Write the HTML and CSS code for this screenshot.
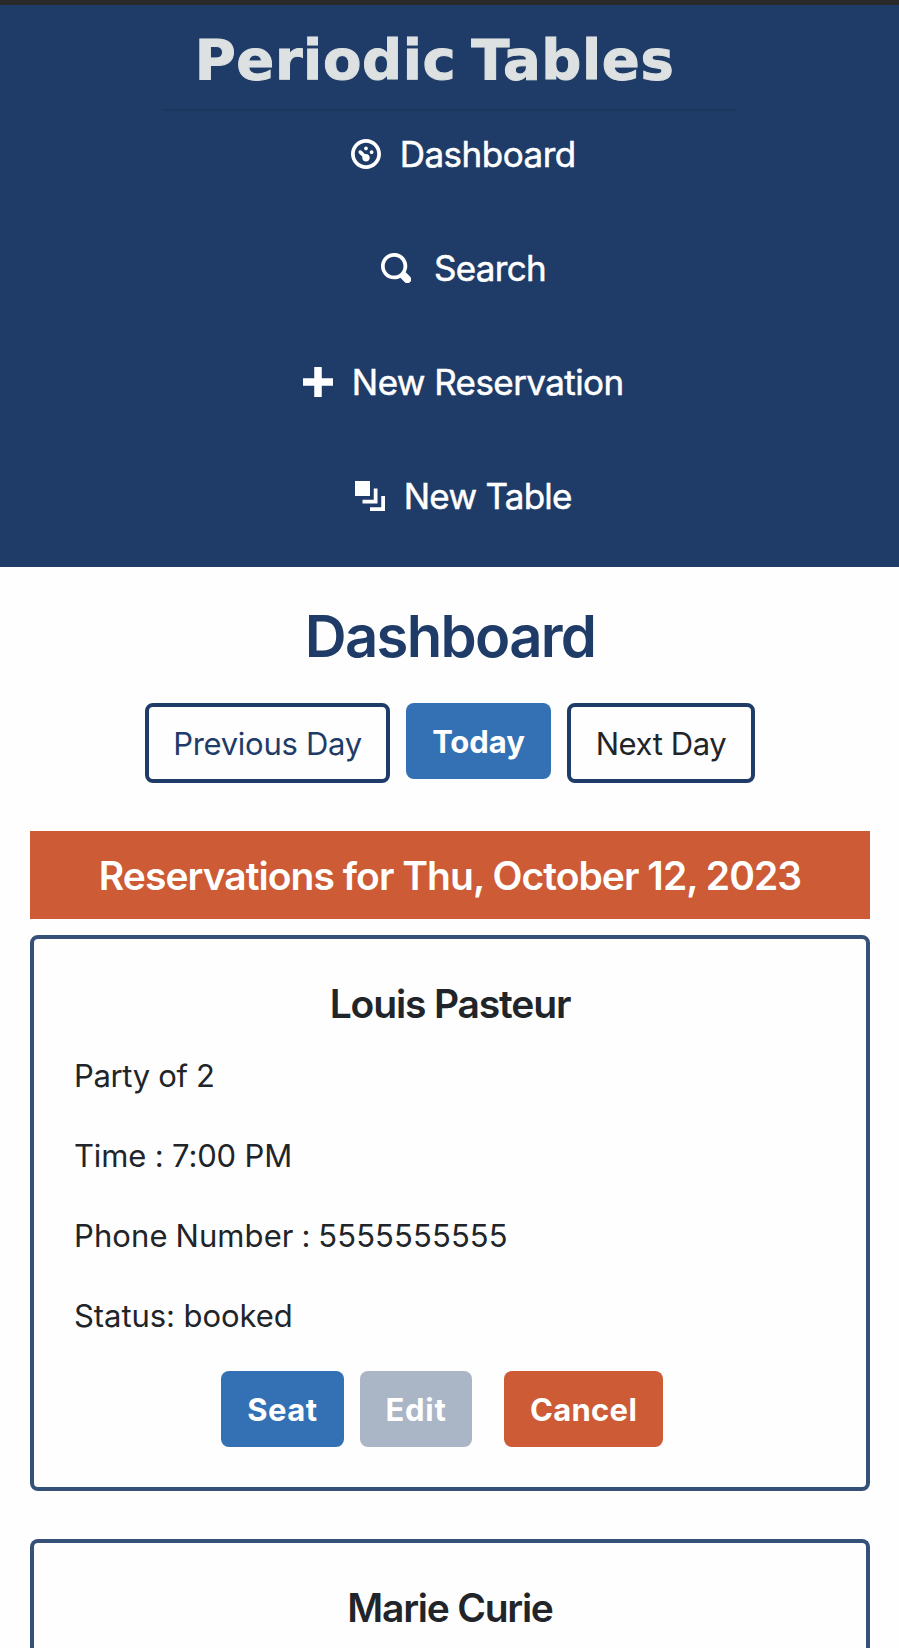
FILE: index.html
```
<!DOCTYPE html>
<html lang="en">
<head>
<meta charset="utf-8">
<title>Periodic Tables</title>
<link rel="stylesheet" href="styles.css">
</head>
<body>
<header class="header">
  <div class="brand">Periodic Tables</div>
  <hr class="divider">
  <nav class="nav">
    <a class="nav-link nav-dashboard"><svg class="oi" viewBox="0 0 8 8"><path d="M4 0c-2.2 0-4 1.8-4 4s1.8 4 4 4 4-1.8 4-4-1.8-4-4-4zm0 1c1.66 0 3 1.34 3 3s-1.34 3-3 3-3-1.34-3-3 1.34-3 3-3zm0 1c-.28 0-.5.22-.5.5s.22.5.5.5.5-.22.5-.5-.22-.5-.5-.5zm-1.66 1a.5.5 0 0 0-.19.84l.91.91c-.02.08-.06.16-.06.25 0 .55.45 1 1 1s1-.45 1-1-.45-1-1-1c-.09 0-.17.04-.25.06l-.91-.91a.5.5 0 0 0-.44-.16.5.5 0 0 0-.06 0zm3.16 0c-.28 0-.5.22-.5.5s.22.5.5.5.5-.22.5-.5-.22-.5-.5-.5z"/></svg><span>Dashboard</span></a>
    <a class="nav-link nav-search"><svg class="oi" viewBox="0 0 8 8"><path d="M3.5 0c-1.93 0-3.5 1.57-3.5 3.5s1.57 3.5 3.5 3.5c.59 0 1.17-.14 1.66-.41a1 1 0 0 0 .13.13l1 1a1.02 1.02 0 1 0 1.44-1.44l-1-1a1 1 0 0 0-.16-.13c.27-.49.44-1.06.44-1.66 0-1.93-1.55-3.5-3.5-3.5zm0 1c1.39 0 2.5 1.11 2.5 2.5 0 .66-.24 1.27-.66 1.72-.01.01-.02.02-.03.03a1 1 0 0 0-.13.13c-.44.4-1.04.63-1.69.63-1.39 0-2.5-1.11-2.5-2.5s1.11-2.5 2.5-2.5z"/></svg><span>Search</span></a>
    <a class="nav-link nav-reservation"><svg class="oi" viewBox="0 0 8 8"><path d="M3 0v3h-3v2h3v3h2v-3h3v-2h-3v-3h-2z"/></svg><span>New Reservation</span></a>
    <a class="nav-link nav-table"><svg class="oi" viewBox="0 0 8 8"><path d="M0 0v4h4v-4h-4zm5 2v3h-3v1h4v-4h-1zm2 2v3h-3v1h4v-4h-1z"/></svg><span>New Table</span></a>
  </nav>
</header>
<main class="main">
  <h1 class="page-title">Dashboard</h1>
  <div class="day-nav">
    <button class="btn btn-outline btn-prev">Previous Day</button>
    <button class="btn btn-blue btn-today">Today</button>
    <button class="btn btn-outline btn-next">Next Day</button>
  </div>
  <h4 class="banner">Reservations for Thu, October 12, 2023</h4>
  <section class="card">
    <h4 class="card-name louis">Louis Pasteur</h4>
    <div class="details">
      <p class="party">Party of 2</p>
      <p class="time">Time : 7:00 PM</p>
      <p class="phone">Phone Number : 5555555555</p>
      <p class="status">Status: booked</p>
    </div>
    <div class="actions">
      <button class="btn btn-blue btn-seat">Seat</button>
      <button class="btn btn-grey btn-edit">Edit</button>
      <button class="btn btn-orange btn-cancel">Cancel</button>
    </div>
  </section>
  <section class="card card-partial">
    <h4 class="card-name marie">Marie Curie</h4>
  </section>
</main>
</body>
</html>
```
FILE: styles.css
```
* { box-sizing: border-box; }

body {
  margin: 0;
  background: #fefefe;
  color: #212529;
  font-family: Inter, "Liberation Sans", sans-serif;
  font-size: 31px;
  line-height: 48px;
}

h1, h4, p { margin: 0; font-weight: 600; }

/* Header */
.header {
  height: 567px;
  padding-top: 21px;
  border-top: 5px solid #2a2a2a;
  background: #1f3c68;
  color: #fff;
}
.brand {
  padding-right: 30px;
  text-align: center;
  font: bold 56px/68px "DejaVu Sans", Verdana, sans-serif;
  letter-spacing: 0.6px;
  word-spacing: -5px;
  -webkit-text-stroke: 1px #dde1e1;
  color: #dde1e1;
}
.divider {
  width: 574px;
  height: 2px;
  margin: 15px auto 16px;
  border: 0;
  background: #1c365e;
}
.nav {
  display: flex;
  flex-direction: column;
  align-items: center;
  gap: 60px;
  padding-left: 28px;
}
.nav-link {
  display: flex;
  align-items: center;
  gap: 18.5px;
  font-size: 35px;
  line-height: 54px;
  -webkit-text-stroke: 0.5px #fff;
}
.oi { width: 30px; height: 30px; fill: currentColor; }
.nav-dashboard { letter-spacing: -0.486px; }
.nav-search { gap: 23px; letter-spacing: -0.689px; }
.nav-reservation { letter-spacing: -0.572px; }
.nav-table { letter-spacing: -0.727px; }

/* Dashboard */
.main { padding: 34px 29px 0 30px; }
.page-title {
  text-align: center;
  font-size: 58px;
  line-height: 70px;
  letter-spacing: -1.7px;
  color: #1f3c68;
}
.day-nav {
  display: flex;
  justify-content: center;
  align-items: flex-start;
  gap: 16px;
  margin: 32px 0 48px;
}
.btn {
  height: 76px;
  padding: 1px 0 0;
  border: 0;
  border-radius: 8px;
  font: 700 31px/48px Inter, "Liberation Sans", sans-serif;
  text-align: center;
  color: #fff;
}
.btn-blue { background: #3470b4; }
.btn-grey { background: #aab5c6; }
.btn-orange { background: #cc5b36; }
.btn-outline {
  height: 80px;
  border: 4px solid #1f3c68;
  background: #fefefe;
  font-weight: 400;
}
.btn-prev { width: 245px; letter-spacing: -0.289px; color: #1f3c68; }
.btn-today { width: 145px; letter-spacing: -0.048px; }
.btn-next { width: 188px; letter-spacing: -0.392px; color: #212529; }

.banner {
  height: 88px;
  padding: 17px 0 15px;
  background: #cc5b36;
  color: #fff;
  text-align: center;
  font-size: 39px;
  line-height: 56px;
  letter-spacing: -0.955px;
}

/* Reservation cards */
.card {
  height: 556px;
  margin: 16px 0 48px;
  padding: 41px 40px 0;
  border: 4px solid #355178;
  border-radius: 8px;
}
.card-partial {
  height: 109px;
  margin-bottom: 0;
  border-bottom: 0;
  border-radius: 8px 8px 0 0;
}
.card-name {
  text-align: center;
  font-size: 39px;
  line-height: 48px;
}
.louis { letter-spacing: -1.15px; }
.marie { letter-spacing: -1.25px; }
.details {
  display: flex;
  flex-direction: column;
  gap: 32px;
  margin: 24px 0 31px;
}
.details p { font-weight: 400; }
.party { letter-spacing: -0.337px; }
.time { letter-spacing: -0.152px; }
.phone { letter-spacing: 0.1px; word-spacing: -1px; }
.status { letter-spacing: -0.063px; }
.actions {
  display: flex;
  justify-content: center;
  gap: 16px;
  padding-right: 16px;
}
.btn-seat { width: 123px; letter-spacing: 0.478px; }
.btn-edit { width: 112px; margin-right: 16px; letter-spacing: 0.743px; }
.btn-cancel { width: 159px; letter-spacing: 0.313px; }
```
